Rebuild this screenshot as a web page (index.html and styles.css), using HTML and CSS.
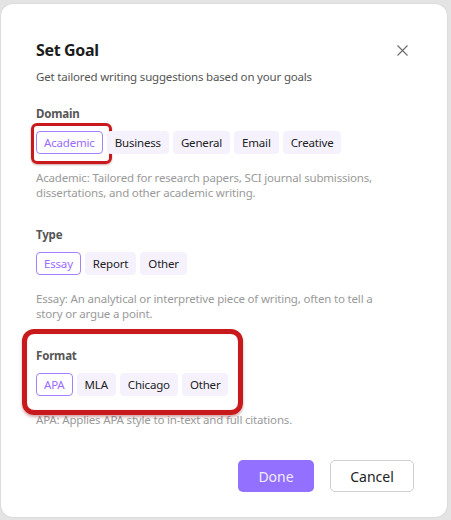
FILE: index.html
```html
<!DOCTYPE html>
<html>
<head>
<meta charset="utf-8">
<link rel="stylesheet" href="styles.css">
</head>
<body>
<div class="dialog">
  <div class="header">
    <h1 class="title">Set Goal</h1>
    <button class="close" aria-label="Close">
      <svg width="11" height="11" viewBox="0 0 11 11"><path d="M0.5 0.5 L10.5 10.5 M10.5 0.5 L0.5 10.5" stroke="#6b6b6b" stroke-width="1.1" fill="none"/></svg>
    </button>
  </div>
  <p class="subtitle">Get tailored writing suggestions based on your goals</p>

  <section class="section first">
    <div class="label">Domain</div>
    <div class="chips">
      <span class="chip selected">Academic<span class="mark mark-small"></span></span>
      <span class="chip">Business</span>
      <span class="chip">General</span>
      <span class="chip">Email</span>
      <span class="chip">Creative</span>
    </div>
    <p class="desc">Academic: Tailored for research papers, SCI journal submissions, dissertations, and other academic writing.</p>
  </section>

  <section class="section">
    <div class="label">Type</div>
    <div class="chips">
      <span class="chip selected">Essay</span>
      <span class="chip">Report</span>
      <span class="chip">Other</span>
    </div>
    <p class="desc">Essay: An analytical or interpretive piece of writing, often to tell a story or argue a point.</p>
  </section>

  <section class="section format">
    <span class="mark mark-big"></span>
    <div class="label">Format</div>
    <div class="chips">
      <span class="chip selected">APA</span>
      <span class="chip">MLA</span>
      <span class="chip">Chicago</span>
      <span class="chip">Other</span>
    </div>
    <p class="desc">APA: Applies APA style to in-text and full citations.</p>
  </section>

  <div class="actions">
    <button class="btn primary">Done</button>
    <button class="btn secondary">Cancel</button>
  </div>
</div>
</body>
</html>
```

FILE: styles.css
```css
* { box-sizing: border-box; }
html, body { margin: 0; padding: 0; }
body {
  width: 451px;
  height: 520px;
  background: #e4e4e4;
  font-family: "Noto Sans", "Open Sans", sans-serif;
  overflow: hidden;
  padding: 4px 4px 0 1px;
}
.dialog {
  position: relative;
  width: 446px;
  height: 513px;
  background: #fff;
  border-radius: 12px;
  padding: 35px 33px 0 35px;
  box-shadow: 0 0 2px rgba(0,0,0,0.12);
}
.header {
  display: flex;
  justify-content: space-between;
  align-items: center;
  height: 22px;
}
.title {
  margin: 0;
  font-size: 16px;
  line-height: 22px;
  font-weight: 700;
  letter-spacing: -0.35px;
  color: #1c1c1c;
}
.close {
  border: 0;
  background: none;
  padding: 0;
  margin-right: 6px;
  width: 11px;
  height: 11px;
  display: flex;
}
.subtitle, .label, .chip, .desc {
  font-size: 11.5px;
  letter-spacing: -0.18px;
}
.subtitle {
  margin: 8px 0 0;
  line-height: 16px;
  color: #555;
}
.section { position: relative; margin-top: 27px; }
.section.first { margin-top: 21px; }
.label {
  line-height: 16px;
  font-weight: 700;
  color: #565656;
}
.chips {
  display: flex;
  gap: 4px;
  margin-top: 9px;
}
.chip {
  position: relative;
  height: 23px;
  padding: 0 7px;
  display: flex;
  align-items: center;
  color: #222;
  background: #f5f2fe;
  border-radius: 4px;
  border: 1px solid transparent;
}
.chip.selected {
  background: #fff;
  border-color: #a580ff;
  color: #9a6cff;
}
.desc {
  margin: 16px 0 0;
  line-height: 15px;
  color: #9a9a9a;
  max-width: 345px;
}
.mark {
  position: absolute;
  border-style: solid;
  border-color: #c8191d;
  pointer-events: none;
  letter-spacing: 0;
}
.mark-small {
  left: -6px;
  top: -9px;
  width: 81px;
  height: 41px;
  border-width: 3px;
  border-radius: 6px;
  box-shadow: 0 1px 2px rgba(120,0,0,0.35);
}
.mark-big {
  left: -14px;
  top: -19px;
  width: 221px;
  height: 86px;
  border-width: 5px;
  border-radius: 12px;
  box-shadow: 0 2px 3px rgba(120,0,0,0.35), inset 0 0 1px rgba(120,0,0,0.4);
}
.actions {
  display: flex;
  justify-content: flex-end;
  gap: 16px;
  margin-top: 33px;
}
.btn {
  height: 32px;
  border-radius: 5px;
  font-family: inherit;
  font-size: 14px;
  cursor: pointer;
}
.primary {
  width: 76px;
  background: #9370ff;
  color: #f1ebff;
  border: 0;
}
.secondary {
  width: 84px;
  background: #fff;
  color: #222;
  border: 1px solid #d0d0d0;
}
```
